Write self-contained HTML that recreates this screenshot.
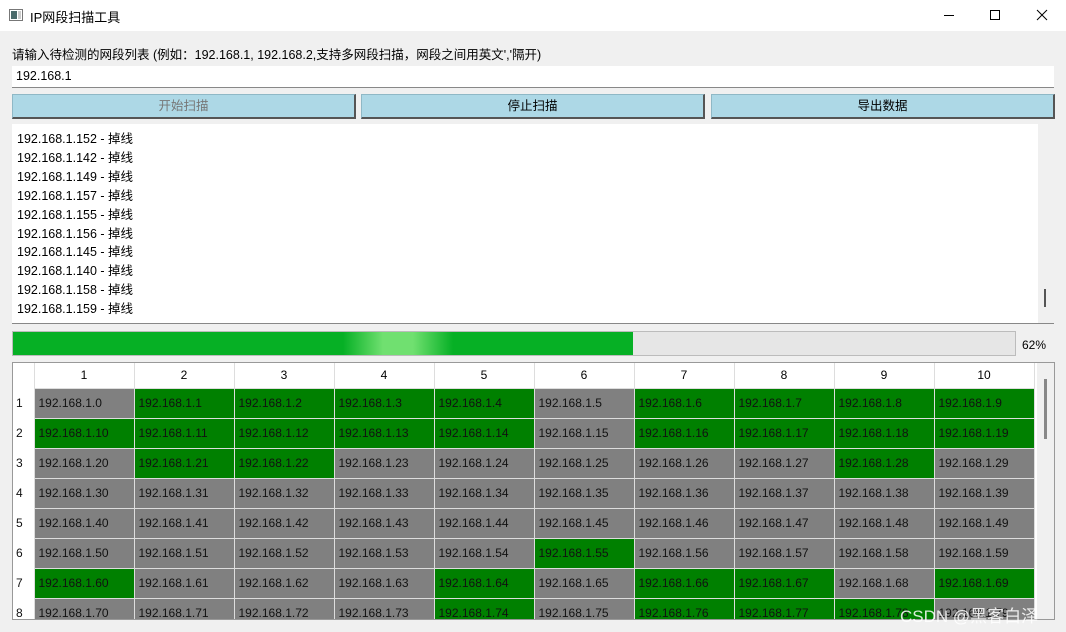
<!DOCTYPE html>
<html><head><meta charset="utf-8"><style>
*{margin:0;padding:0;box-sizing:border-box}
body{width:1066px;height:632px;overflow:hidden;background:#f0f0f0;font-family:"Liberation Sans","Noto Sans CJK SC",sans-serif;font-size:12px;color:#000;position:relative}
.abs{position:absolute}
.title{left:0;top:0;width:1066px;height:31px;background:#fff}
.btn{top:94px;height:25px;background:#add8e6;border:1px solid #8fb8c6;border-right:2px solid #555;border-bottom:2px solid #555;text-align:center;line-height:22px;font-size:12.5px}
table{border-collapse:collapse;table-layout:fixed}
td{height:30px;border:1px solid #ddd;padding-left:4px;font-size:12px;color:#111;white-space:nowrap;overflow:hidden}
.g{background:#008000}.r{background:#808080}
th{font-weight:normal;height:25px;background:#fff;border-right:1px solid #ddd;font-size:12px}
.rh{background:#fff;padding-left:3px;border:none;width:21px}
</style></head><body>
<div class="abs title">
<svg class="abs" style="left:9px;top:9px" width="14" height="12"><rect x="0.5" y="0.5" width="13" height="11" fill="#fff" stroke="#777"/><rect x="2" y="2" width="6" height="8" fill="#4a6a6a"/><rect x="9" y="2" width="3" height="8" fill="#ccc"/></svg>
<div class="abs" style="left:30px;top:7px;font-size:13px">IP网段扫描工具</div>
<div class="abs" style="left:944px;top:15px;width:10px;height:1px;background:#000"></div>
<div class="abs" style="left:990px;top:10px;width:10px;height:10px;border:1px solid #000"></div>
<svg class="abs" style="left:1036px;top:9px" width="12" height="12"><path d="M1 1L11 11M11 1L1 11" stroke="#000" stroke-width="1"/></svg>
</div>
<div class="abs" style="left:12px;top:44px;font-size:12.5px">请输入待检测的网段列表 (例如：192.168.1, 192.168.2,支持多网段扫描，网段之间用英文','隔开)</div>
<div class="abs" style="left:12px;top:66px;width:1042px;height:22px;background:#fff;border-bottom:1px solid #888;padding:3px 4px;font-size:12.5px">192.168.1</div>
<div class="abs btn" style="left:12px;width:344px;color:#777">开始扫描</div>
<div class="abs btn" style="left:361px;width:344px">停止扫描</div>
<div class="abs btn" style="left:711px;width:344px">导出数据</div>
<div class="abs" style="left:12px;top:124px;width:1042px;height:200px;background:#fff;border-bottom:1px solid #888;padding:6px 5px;font-size:12.5px;line-height:18.9px">
192.168.1.152 - 掉线<br>192.168.1.142 - 掉线<br>192.168.1.149 - 掉线<br>192.168.1.157 - 掉线<br>192.168.1.155 - 掉线<br>192.168.1.156 - 掉线<br>192.168.1.145 - 掉线<br>192.168.1.140 - 掉线<br>192.168.1.158 - 掉线<br>192.168.1.159 - 掉线
<div class="abs" style="left:1026px;top:0;width:16px;height:199px;background:#f0f0f0"></div>
<div class="abs" style="left:1032px;top:165px;width:2px;height:18px;background:#555"></div>
</div>
<div class="abs" style="left:12px;top:331px;width:1004px;height:25px;background:#e6e6e6;border:1px solid #bcbcbc"></div>
<div class="abs" style="left:13px;top:332px;width:620px;height:23px;background:linear-gradient(90deg,#06b025 0,#06b025 330px,#70e070 370px,#70e070 400px,#06b025 440px,#06b025 100%)"></div>
<div class="abs" style="left:1022px;top:338px;font-size:12px">62%</div>
<div class="abs" style="left:12px;top:362px;width:1043px;height:258px;background:#fff;border:1px solid #999;overflow:hidden">
<div class="abs" style="left:1024px;top:0;width:18px;height:258px;background:#f0f0f0"></div>
<div class="abs" style="left:1031px;top:16px;width:3px;height:60px;background:#888"></div>
<table class="abs" style="left:0;top:0;width:1021px">
<colgroup><col style="width:21px"><col span="10" style="width:100px"></colgroup>
<tr><th></th><th>1</th><th>2</th><th>3</th><th>4</th><th>5</th><th>6</th><th>7</th><th>8</th><th>9</th><th>10</th></tr>
<tr><td class="rh">1</td><td class="r">192.168.1.0</td><td class="g">192.168.1.1</td><td class="g">192.168.1.2</td><td class="g">192.168.1.3</td><td class="g">192.168.1.4</td><td class="r">192.168.1.5</td><td class="g">192.168.1.6</td><td class="g">192.168.1.7</td><td class="g">192.168.1.8</td><td class="g">192.168.1.9</td></tr>
<tr><td class="rh">2</td><td class="g">192.168.1.10</td><td class="g">192.168.1.11</td><td class="g">192.168.1.12</td><td class="g">192.168.1.13</td><td class="g">192.168.1.14</td><td class="r">192.168.1.15</td><td class="g">192.168.1.16</td><td class="g">192.168.1.17</td><td class="g">192.168.1.18</td><td class="g">192.168.1.19</td></tr>
<tr><td class="rh">3</td><td class="r">192.168.1.20</td><td class="g">192.168.1.21</td><td class="g">192.168.1.22</td><td class="r">192.168.1.23</td><td class="r">192.168.1.24</td><td class="r">192.168.1.25</td><td class="r">192.168.1.26</td><td class="r">192.168.1.27</td><td class="g">192.168.1.28</td><td class="r">192.168.1.29</td></tr>
<tr><td class="rh">4</td><td class="r">192.168.1.30</td><td class="r">192.168.1.31</td><td class="r">192.168.1.32</td><td class="r">192.168.1.33</td><td class="r">192.168.1.34</td><td class="r">192.168.1.35</td><td class="r">192.168.1.36</td><td class="r">192.168.1.37</td><td class="r">192.168.1.38</td><td class="r">192.168.1.39</td></tr>
<tr><td class="rh">5</td><td class="r">192.168.1.40</td><td class="r">192.168.1.41</td><td class="r">192.168.1.42</td><td class="r">192.168.1.43</td><td class="r">192.168.1.44</td><td class="r">192.168.1.45</td><td class="r">192.168.1.46</td><td class="r">192.168.1.47</td><td class="r">192.168.1.48</td><td class="r">192.168.1.49</td></tr>
<tr><td class="rh">6</td><td class="r">192.168.1.50</td><td class="r">192.168.1.51</td><td class="r">192.168.1.52</td><td class="r">192.168.1.53</td><td class="r">192.168.1.54</td><td class="g">192.168.1.55</td><td class="r">192.168.1.56</td><td class="r">192.168.1.57</td><td class="r">192.168.1.58</td><td class="r">192.168.1.59</td></tr>
<tr><td class="rh">7</td><td class="g">192.168.1.60</td><td class="r">192.168.1.61</td><td class="r">192.168.1.62</td><td class="r">192.168.1.63</td><td class="g">192.168.1.64</td><td class="r">192.168.1.65</td><td class="g">192.168.1.66</td><td class="g">192.168.1.67</td><td class="r">192.168.1.68</td><td class="g">192.168.1.69</td></tr>
<tr><td class="rh">8</td><td class="r">192.168.1.70</td><td class="r">192.168.1.71</td><td class="r">192.168.1.72</td><td class="r">192.168.1.73</td><td class="g">192.168.1.74</td><td class="r">192.168.1.75</td><td class="g">192.168.1.76</td><td class="g">192.168.1.77</td><td class="g">192.168.1.78</td><td class="r">192.168.1.79</td></tr>
</table>
</div>
<div class="abs" style="left:900px;top:602px;font-size:17px;color:rgba(255,255,255,0.85)">CSDN @黑客白泽</div>
</body></html>
